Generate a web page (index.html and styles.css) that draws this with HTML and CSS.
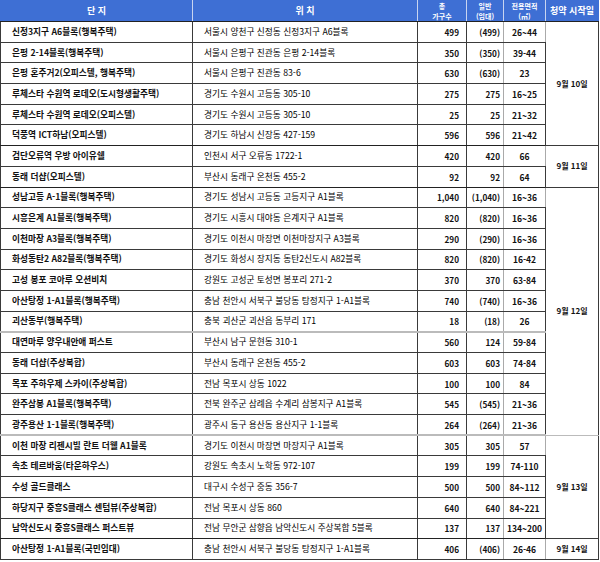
FILE: index.html
```html
<!DOCTYPE html>
<html lang="ko">
<head>
<meta charset="utf-8">
<link rel="stylesheet" href="styles.css">
</head>
<body>
<table class="t">
<colgroup>
<col class="c1"><col class="c2"><col class="c3"><col class="c4"><col class="c5"><col class="c6">
</colgroup>
<thead>
<tr class="hd">
<th class="sp">단 지</th><th class="sp">위 치</th><th class="two">총<br>가구수</th><th class="two">일반<br>(임대)</th><th class="two">전용면적<br>(㎡)</th><th class="sp">청약 시작일</th>
</tr>
</thead>
<tbody>
<tr><td class="n">신정3지구 A6블록(행복주택)</td><td class="l">서울시 양천구 신정동 신정3지구 A6블록</td><td class="r">499</td><td class="g">(499)</td><td class="a">26~44</td><td class="d" rowspan="6">9월 10일</td></tr>
<tr><td class="n">은평 2-14블록(행복주택)</td><td class="l">서울시 은평구 진관동 은평 2-14블록</td><td class="r">350</td><td class="g">(350)</td><td class="a">39-44</td></tr>
<tr><td class="n">은평 혼주거2(오피스텔, 행복주택)</td><td class="l">서울시 은평구 진관동 83-6</td><td class="r">630</td><td class="g">(630)</td><td class="a">23</td></tr>
<tr><td class="n">루체스타 수원역 로데오(도시형생활주택)</td><td class="l">경기도 수원시 고등동 305-10</td><td class="r">275</td><td class="g">275</td><td class="a">16~25</td></tr>
<tr><td class="n">루체스타 수원역 로데오(오피스텔)</td><td class="l">경기도 수원시 고등동 305-10</td><td class="r">25</td><td class="g">25</td><td class="a">21~32</td></tr>
<tr class="end"><td class="n">덕풍역 ICT하남(오피스텔)</td><td class="l">경기도 하남시 신장동 427-159</td><td class="r">596</td><td class="g">596</td><td class="a">21~42</td></tr>
<tr><td class="n">검단오류역 우방 아이유쉘</td><td class="l">인천시 서구 오류동 1722-1</td><td class="r">420</td><td class="g">420</td><td class="a">66</td><td class="d" rowspan="2">9월 11일</td></tr>
<tr class="end"><td class="n">동래 더샵(오피스텔)</td><td class="l">부산시 동래구 온천동 455-2</td><td class="r">92</td><td class="g">92</td><td class="a">64</td></tr>
<tr><td class="n">성남고등 A-1블록(행복주택)</td><td class="l">경기도 성남시 고등동 고등지구 A1블록</td><td class="r">1,040</td><td class="g">(1,040)</td><td class="a">16~36</td><td class="d dl" rowspan="12">9월 12일</td></tr>
<tr><td class="n">시흥은계 A1블록(행복주택)</td><td class="l">경기도 시흥시 대야동 은계지구 A1블록</td><td class="r">820</td><td class="g">(820)</td><td class="a">16~36</td></tr>
<tr><td class="n">이천마장 A3블록(행복주택)</td><td class="l">경기도 이천시 마장면 이천마장지구 A3블록</td><td class="r">290</td><td class="g">(290)</td><td class="a">16~36</td></tr>
<tr><td class="n">화성동탄2 A82블록(행복주택)</td><td class="l">경기도 화성시 장지동 동탄2신도시 A82블록</td><td class="r">820</td><td class="g">(820)</td><td class="a">16-42</td></tr>
<tr><td class="n">고성 봉포 코아루 오션비치</td><td class="l">강원도 고성군 토성면 봉포리 271-2</td><td class="r">370</td><td class="g">370</td><td class="a">63-84</td></tr>
<tr><td class="n">아산탕정 1-A1블록(행복주택)</td><td class="l">충남 천안시 서북구 불당동 탕정지구 1-A1블록</td><td class="r">740</td><td class="g">(740)</td><td class="a">16~36</td></tr>
<tr class="lite"><td class="n">괴산동부(행복주택)</td><td class="l">충북 괴산군 괴산읍 동부리 171</td><td class="r">18</td><td class="g">(18)</td><td class="a">26</td></tr>
<tr><td class="n">대연마루 양우내안애 퍼스트</td><td class="l">부산시 남구 문현동 310-1</td><td class="r">560</td><td class="g">124</td><td class="a">59-84</td></tr>
<tr><td class="n">동래 더샵(주상복합)</td><td class="l">부산시 동래구 온천동 455-2</td><td class="r">603</td><td class="g">603</td><td class="a">74-84</td></tr>
<tr><td class="n">목포 주하우제 스카이(주상복합)</td><td class="l">전남 목포시 상동 1022</td><td class="r">100</td><td class="g">100</td><td class="a">84</td></tr>
<tr><td class="n">완주삼봉 A1블록(행복주택)</td><td class="l">전북 완주군 삼례읍 수계리 삼봉지구 A1블록</td><td class="r">545</td><td class="g">(545)</td><td class="a">21~36</td></tr>
<tr class="lite"><td class="n">광주용산 1-1블록(행복주택)</td><td class="l">광주시 동구 용산동 용산지구 1-1블록</td><td class="r">264</td><td class="g">(264)</td><td class="a">21~36</td></tr>
<tr><td class="n">이천 마장 리젠시빌 란트 더웰 A1블록</td><td class="l">경기도 이천시 마장면 마장지구 A1블록</td><td class="r">305</td><td class="g">305</td><td class="a">57</td><td class="d" rowspan="5">9월 13일</td></tr>
<tr><td class="n">속초 테르바움(타운하우스)</td><td class="l">강원도 속초시 노학동 972-107</td><td class="r">199</td><td class="g">199</td><td class="a">74-110</td></tr>
<tr><td class="n">수성 골드클래스</td><td class="l">대구시 수성구 중동 356-7</td><td class="r">500</td><td class="g">500</td><td class="a">84~112</td></tr>
<tr><td class="n">하당지구 중흥S클래스 센텀뷰(주상복합)</td><td class="l">전남 목포시 상동 860</td><td class="r">640</td><td class="g">640</td><td class="a">84~221</td></tr>
<tr class="end"><td class="n">남악신도시 중흥S클래스 퍼스트뷰</td><td class="l">전남 무안군 삼향읍 남악신도시 주상복합 5블록</td><td class="r">137</td><td class="g">137</td><td class="a">134~200</td></tr>
<tr><td class="n">아산탕정 1-A1블록(국민임대)</td><td class="l">충남 천안시 서북구 불당동 탕정지구 1-A1블록</td><td class="r">406</td><td class="g">(406)</td><td class="a">26-46</td><td class="d">9월 14일</td></tr>
</tbody>
</table>
</body>
</html>
```
FILE: styles.css
```css
html, body {
  margin: 0;
  padding: 0;
  background: #ffffff;
}
body {
  font-family: "Noto Sans CJK KR", "Noto Sans", sans-serif;
  color: #111111;
}
.t {
  border-collapse: collapse;
  table-layout: fixed;
  width: 598px;
  font-size: 8.7px;
  line-height: 10px;
}
.c1 { width: 192px; }
.c2 { width: 225px; }
.c3 { width: 49px; }
.c4 { width: 37px; }
.c5 { width: 42px; }
.c6 { width: 53px; }
.hd th {
  background: #3e6fd4;
  color: #ffffff;
  font-weight: 700;
  height: 20px;
  padding: 0;
  border: 1px solid #3e6fd4;
  border-bottom: 1px solid #222;
  border-right: 1px solid #c8d4f0;
  text-align: center;
  white-space: nowrap;
  overflow: hidden;
}
.hd th:last-child { border-right: 1px solid #3e6fd4; }
.hd th.sp { font-size: 9px; line-height: 10px; }
.hd th.two { font-size: 7px; line-height: 10px; }
tbody tr { height: 20.7px; }
td {
  padding: 0;
  border: 1px solid #3a3a3a;
  white-space: nowrap;
  overflow: hidden;
}
td.n { padding-left: 11px; font-weight: 700; }
td.l { padding-left: 11px; font-weight: 400; color: #000000; }
td.r { text-align: right; padding-right: 7px; font-size: 8.2px; font-weight: 700; }
td.g { text-align: right; padding-right: 3px; font-size: 8.2px; font-weight: 700; border-right-color: #aaaaaa; }
td.a { text-align: center; font-size: 8.5px; font-weight: 700; border-right-color: #aaaaaa; }
td.d { text-align: center; font-size: 8px; font-weight: 700; border-color: #3a3a3a; }
td.dl { border-bottom-color: #bbbbbb; }
tr.lite td { border-bottom: 2px solid #bbbbbb; }
tr.end td { border-bottom: 1px solid #222222; }
```
